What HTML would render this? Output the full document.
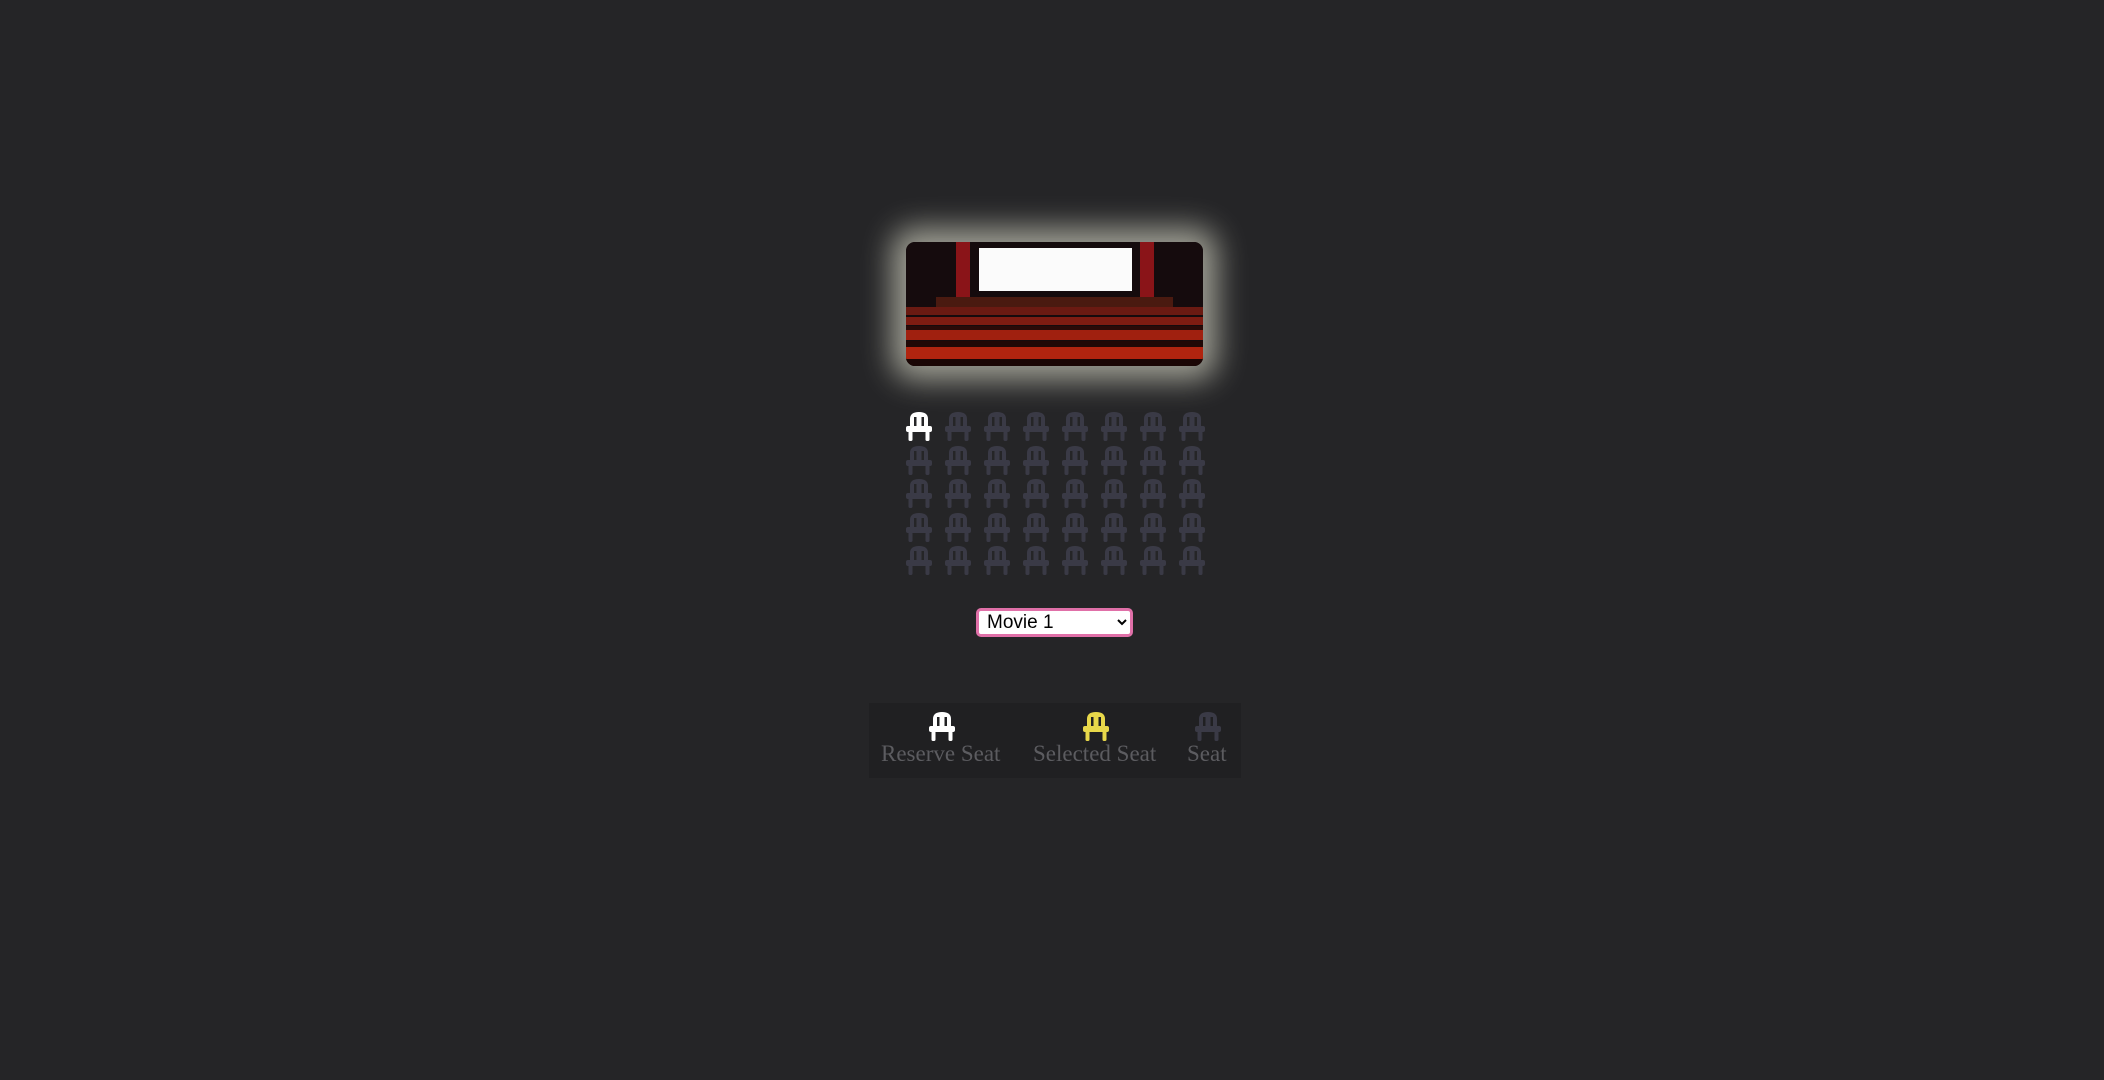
<!DOCTYPE html>
<html><head><meta charset="utf-8"><style>
html,body{margin:0;padding:0;width:2104px;height:1080px;background:#252527;overflow:hidden;font-family:"Liberation Serif",serif}
.screen{position:absolute;left:906px;top:242px;width:297px;height:124px;border-radius:9px;overflow:hidden;
box-shadow:0 0 30px 14px rgba(240,240,220,.6);background:#1a0e10}
.seat{position:absolute;width:26px;height:30px}
select{position:absolute;left:976px;top:608px;width:157px;height:29px;border:3px solid #e070a8;border-radius:5px;background:#fff;font-family:"Liberation Sans",sans-serif;font-size:19px;padding:0 4px;box-sizing:border-box}
.legend{position:absolute;left:869px;top:703px;width:372px;height:75px;background:#202022}
.lab{position:absolute;top:38px;font-size:23px;color:#5c5c60;white-space:nowrap}
</style></head><body>
<svg width="0" height="0" style="position:absolute"><defs>
<symbol id="ch" viewBox="0 0 26 30">
<path d="M4 15V8Q4 1 13 1Q22 1 22 8V15H18V6H15.5V15H10.5V6H8V15Z"/>
<rect x="0" y="15" width="26" height="6" rx="2"/>
<rect x="2.5" y="20" width="4" height="10" rx="1.5"/>
<rect x="19.5" y="20" width="4" height="10" rx="1.5"/>
</symbol></defs></svg>
<div class="screen">
<svg width="297" height="124" viewBox="0 0 297 124">
<rect width="297" height="124" fill="#150b0d"/>
<rect x="50" y="0" width="14" height="65" fill="#8a1418"/>
<rect x="234" y="0" width="14" height="65" fill="#8a1418"/>
<rect x="73" y="6" width="153" height="43" fill="#fbfbfb"/>
<rect x="30" y="55" width="237" height="10" fill="#4a1a10"/>
<rect x="0" y="65" width="297" height="8" fill="#6a1a12"/>
<rect x="0" y="75" width="297" height="8" fill="#7e1c12"/>
<rect x="0" y="84" width="297" height="4" fill="#2a0a08"/>
<rect x="0" y="88" width="297" height="10" fill="#a0200f"/>
<rect x="0" y="99" width="297" height="6" fill="#200806"/>
<rect x="0" y="105" width="297" height="12" fill="#b0240f"/>
<rect x="0" y="117" width="297" height="7" fill="#1a0605"/>
</svg></div>
<div id="seats"></div>
<select><option>Movie 1</option></select>
<div class="legend">
<svg class="seat" style="left:60px;top:8px" fill="#ffffff"><use href="#ch"/></svg>
<svg class="seat" style="left:214px;top:8px" fill="#e8d84a"><use href="#ch"/></svg>
<svg class="seat" style="left:326px;top:8px" fill="#3a3a46"><use href="#ch"/></svg>
<div class="lab" style="left:12px">Reserve Seat</div>
<div class="lab" style="left:164px">Selected Seat</div>
<div class="lab" style="left:318px">Seat</div>
</div>
<script>
var s='';for(var r=0;r<5;r++)for(var c=0;c<8;c++){s+='<svg class="seat" style="left:'+(906+c*39)+'px;top:'+(411+r*33.6)+'px" fill="'+(r+c==0?'#fff':'#3a3a46')+'"><use href="#ch"/></svg>';}
document.getElementById('seats').innerHTML=s;
</script>
</body></html>
